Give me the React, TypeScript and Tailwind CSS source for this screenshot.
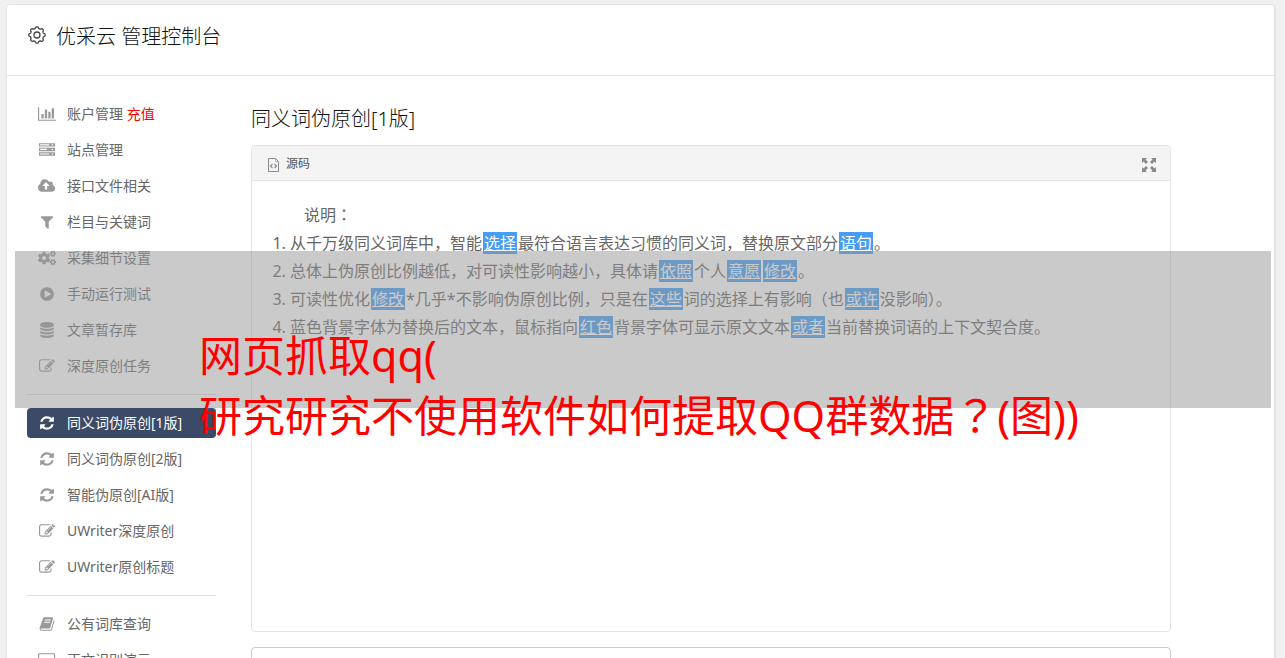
import type { ReactNode } from "react";
import { FaCogs } from "react-icons/fa";

function Glyph({ d, width = 1792 }: { d: string; width?: number }) {
  return (
    <svg viewBox={`0 0 ${width} 1792`} className="h-4 w-auto" fill="currentColor" fillRule="evenodd" aria-hidden="true">
      <path d={d} />
    </svg>
  );
}

const chart = (
  <Glyph
    width={2048}
    d="M640 896v512h-256v-512h256zm384-512v1024h-256v-1024h256zm1024 1152v128h-2048v-1536h128v1408h1920zm-640-896v768h-256v-768h256zm384-384v1152h-256v-1152h256z"
  />
);
const server = (
  <Glyph
    width={1792}
    d="M0 128h1792v384h-1792zM128 256v128h1024v-128zM1504 320m-90 0a90 90 0 1 0 180 0a90 90 0 1 0-180 0zM0 640h1792v384h-1792zM128 768v128h768v-128zM1504 832m-90 0a90 90 0 1 0 180 0a90 90 0 1 0-180 0zM0 1152h1792v384h-1792zM128 1280v128h1024v-128zM1504 1344m-90 0a90 90 0 1 0 180 0a90 90 0 1 0-180 0z"
  />
);
const cloud = (
  <Glyph
    width={1920}
    d="M1280 864q0-14-9-23l-352-352q-9-9-23-9t-23 9l-351 351q-10 12-10 24 0 14 9 23t23 9h224v352q0 13 9.5 22.5t22.5 9.5h192q13 0 22.5-9.5t9.5-22.5v-352h224q13 0 22.5-9.5t9.5-22.5zm640 288q0 159-112.5 271.5t-271.5 112.5h-1088q-185 0-316.5-131.5t-131.5-316.5q0-130 70-240t188-165q-2-30-2-43 0-212 150-362t362-150q156 0 285.5 87t188.5 231q71-62 166-62 106 0 181 75t75 181q0 76-41 138 130 31 213.5 135.5t83.5 238.5z"
  />
);
const filter = (
  <Glyph d="M1595 295q17 41-14 70l-493 493v742q0 42-39 59-13 5-25 5-27 0-45-19l-256-256q-19-19-19-45v-486l-493-493q-31-29-14-70 17-39 59-39h1280q42 0 59 39z" />
);
const cogs = <FaCogs className="size-[18px]" aria-hidden="true" />;
const play = (
  <Glyph d="M896 128q209 0 385.5 103t279.5 279.5 103 385.5-103 385.5-279.5 279.5-385.5 103-385.5-103-279.5-279.5-103-385.5 103-385.5 279.5-279.5 385.5-103zm384 823q32-18 32-55t-32-55l-544-320q-31-19-64-1-32 19-32 56v640q0 37 32 56 16 8 32 8 17 0 32-9z" />
);
const database = (
  <Glyph d="M896 768q237 0 443-43t325-127v170q0 69-103 128t-280 93.5-385 34.5-385-34.5-280-93.5-103-128v-170q119 84 325 127t443 43zm0 768q237 0 443-43t325-127v170q0 69-103 128t-280 93.5-385 34.5-385-34.5-280-93.5-103-128v-170q119 84 325 127t443 43zm0-384q237 0 443-43t325-127v170q0 69-103 128t-280 93.5-385 34.5-385-34.5-280-93.5-103-128v-170q119 84 325 127t443 43zm0-1152q208 0 385 34.5t280 93.5 103 128v128q0 69-103 128t-280 93.5-385 34.5-385-34.5-280-93.5-103-128v-128q0-69 103-128t280-93.5 385-34.5z" />
);
const edit = (
  <Glyph d="M888 1184l116-116-152-152-116 116v56h96v96h56zm440-720q-16-16-33 1l-350 350q-17 17-1 33t33-1l350-350q17-17 1-33zm80 594v190q0 119-84.5 203.5t-203.5 84.5h-832q-119 0-203.5-84.5t-84.5-203.5v-832q0-119 84.5-203.5t203.5-84.5h832q63 0 117 25 15 7 18 23 3 17-9 29l-49 49q-14 14-32 8-23-6-45-6h-832q-66 0-113 47t-47 113v832q0 66 47 113t113 47h832q66 0 113-47t47-113v-126q0-13 9-22l64-64q15-15 35-7t20 29zm-96-738l288 288-672 672h-288v-288zm444 132l-92 92-288-288 92-92q28-28 68-28t68 28l152 152q28 28 28 68t-28 68z" />
);
const refresh = (
  <Glyph d="M1639 1056q0 5-1 7-64 268-268 434.5t-478 166.5q-146 0-282.5-55t-243.5-157l-129 129q-19 19-45 19t-45-19-19-45v-448q0-26 19-45t45-19h448q26 0 45 19t19 45-19 45l-137 137q71 66 161 102t187 36q134 0 250-65t186-179q11-17 53-117 8-23 30-23h192q13 0 22.5 9.5t9.5 22.5zm25-800v448q0 26-19 45t-45 19h-448q-26 0-45-19t-19-45 19-45l138-138q-148-137-349-137-134 0-250 65t-186 179q-11 17-53 117-8 23-30 23h-199q-13 0-22.5-9.5t-9.5-22.5v-7q65-268 270-434.5t480-166.5q146 0 284 55.5t245 156.5l130-129q19-19 45-19t45 19 19 45z" />
);
const book = (
  <Glyph d="M1703 478q40 57 18 129l-275 906q-19 64-76.5 107.5t-122.5 43.5h-923q-77 0-148.5-53.5t-99.5-131.5q-24-67-2-127 0-4 3-27t4-37q1-8-3-21.5t-3-19.5q2-11 8-21t16.5-23.5 16.5-23.5q23-38 45-91.5t30-91.5q3-10 .5-30t-.5-28q3-11 17-28t17-23q21-36 42-92t25-90q1-9-2.5-32t.5-28q4-13 22-30.5t22-22.5q19-26 42.5-84.5t27.5-96.5q1-8-3-25.5t-2-26.5q2-8 9-18t18-23 17-21q8-12 16.5-30.5t15-35 16-36 19.5-32 26.5-23.5 36-11.5 47.5 5.5l-1 3q38-9 51-9h761q74 0 114 56t18 130l-274 906q-36 119-71.5 153.5t-128.5 34.5h-869q-27 0-38 15-11 16-1 43 24 70 144 70h923q29 0 56-15.5t35-41.5l300-987q7-22 5-57 38 15 59 43zm-1064 2q-4 13 2 22.5t20 9.5h608q13 0 25.5-9.5t16.5-22.5l21-64q4-13-2-22.5t-20-9.5h-608q-13 0-25.5 9.5t-16.5 22.5zm-83 256q-4 13 2 22.5t20 9.5h608q13 0 25.5-9.5t16.5-22.5l21-64q4-13-2-22.5t-20-9.5h-608q-13 0-25.5 9.5t-16.5 22.5z" />
);
const desktop = (
  <Glyph
    width={1920}
    d="M160 128h1600q160 0 160 160v1088q0 160-160 160h-544v128h-512v-128h-544q-160 0-160-160v-1088q0-160 160-160zM160 256q-32 0-32 32v832q0 32 32 32h1600q32 0 32-32v-832q0-32-32-32z"
  />
);

function GearOutline() {
  const points: string[] = [];
  const steps = 96;
  for (let i = 0; i < steps; i += 1) {
    const angle = (i / steps) * Math.PI * 2;
    const radius = 7.4 + 0.8 * Math.tanh(2 * Math.cos(angle * 8));
    points.push(`${(10 + radius * Math.cos(angle)).toFixed(2)},${(10 + radius * Math.sin(angle)).toFixed(2)}`);
  }
  return (
    <svg viewBox="0 0 20 20" className="size-5" fill="none" stroke="#444" strokeWidth="1.3" aria-hidden="true">
      <polygon points={points.join(" ")} strokeLinejoin="round" />
      <circle cx="10" cy="10" r="3" />
    </svg>
  );
}

type Item = { icon: ReactNode; label: string; extra?: string; active?: boolean };

const groups: Item[][] = [
  [
    { icon: chart, label: "账户管理", extra: "充值" },
    { icon: server, label: "站点管理" },
    { icon: cloud, label: "接口文件相关" },
    { icon: filter, label: "栏目与关键词" },
    { icon: cogs, label: "采集细节设置" },
    { icon: play, label: "手动运行测试" },
    { icon: database, label: "文章暂存库" },
    { icon: edit, label: "深度原创任务" },
  ],
  [
    { icon: refresh, label: "同义词伪原创[1版]", active: true },
    { icon: refresh, label: "同义词伪原创[2版]" },
    { icon: refresh, label: "智能伪原创[AI版]" },
    { icon: edit, label: "UWriter深度原创" },
    { icon: edit, label: "UWriter原创标题" },
  ],
  [
    { icon: book, label: "公有词库查询" },
    { icon: desktop, label: "正文识别演示" },
  ],
];

function NavItem({ icon, label, extra, active }: Item) {
  return (
    <li>
      <a
        href="#"
        className={
          active
            ? "flex h-[30px] items-center gap-2.5 rounded bg-[#3b4a66] pl-2.5 text-white"
            : "flex h-[30px] items-center gap-2.5 rounded pl-2.5 text-[#666]"
        }
      >
        <span className={active ? "flex w-5 justify-center text-white" : "flex w-5 justify-center text-[#999]"}>
          {icon}
        </span>
        <span>
          {label}
          {extra && <span className="text-[#f00]"> {extra}</span>}
        </span>
      </a>
    </li>
  );
}

function Mark({ children }: { children: ReactNode }) {
  return <span className="mx-px bg-[#459df5] px-px text-white underline">{children}</span>;
}

// Full-width punctuation that sits in the middle of its square.
function Centered({ children }: { children: ReactNode }) {
  return (
    <span lang="ja" className="font-['Noto_Sans_CJK_JP',sans-serif] leading-none">
      {children}
    </span>
  );
}

export default function App() {
  return (
    <div className="relative h-screen overflow-hidden bg-[#f0f0f0] pt-1 pr-[9px] pl-1.5 font-['Noto_Sans','Noto_Sans_CJK_SC',sans-serif] text-sm text-[#666]">
      <div className="min-h-full rounded-t border border-r-2 border-[#e4e4e4] bg-white">
        <header className="flex h-[71px] items-start gap-[9px] border-b border-[#e4e4e4] pt-4 pl-5">
          <span className="pt-1">
            <GearOutline />
          </span>
          <h1 className="text-xl leading-8 font-light text-[#111]">优采云 管理控制台</h1>
        </header>

        <div className="flex items-start">
          <nav className="ml-5 w-[189px] shrink-0 pt-[23px]">
            {groups.map((items, index) => (
              <ul
                key={index}
                className={
                  index === 0
                    ? "flex flex-col gap-1.5"
                    : "mt-[13px] flex flex-col gap-1.5 border-t border-[#ddd] pt-[13px]"
                }
              >
                {items.map((item) => (
                  <NavItem key={item.label} {...item} />
                ))}
              </ul>
            ))}
          </nav>

          <main className="mr-[103px] ml-[35px] min-w-0 flex-1 pt-[27px]">
            <h2 id="page-title" className="text-xl leading-8 font-light text-[#111]">
              同义词伪原创[1版]
            </h2>

            <section className="mt-2.5 rounded border border-[#e4e4e4]">
              <div className="flex h-[35px] items-center justify-between rounded-t border-b border-[#e4e4e4] bg-[#f4f4f4] pr-3.5 pl-4">
                <button type="button" className="flex items-center gap-[7px] pt-0.5 text-xs text-[#555]">
                  <svg viewBox="0 0 11 14" className="mt-0.5 h-3.5 w-[11px]" fill="none" stroke="#8a8a8a" aria-hidden="true">
                    <path d="M.5.5h7l3 3v10H.5z" />
                    <path d="M7.5.5v3h3" strokeWidth=".6" />
                    <path d="M4.5 6l-2 2 2 2M6.5 6l2 2-2 2" strokeWidth="1.2" />
                  </svg>
                  源码
                </button>
                <button type="button" aria-labelledby="page-title">
                  <svg viewBox="0 0 14 14" className="mt-1 size-3.5" fill="#8a8a8a" aria-hidden="true">
                    <path d="M0 0h5L3.500 1.500l2.500 2.500-2 2-2.500-2.500L0 5zM14 0v5l-1.500-1.500L10 6 8 4l2.500-2.500L9 0zM0 14V9l1.500 1.500L4 8l2 2-2.500 2.500L5 14zM14 14H9l1.500-1.500L8 10l2-2 2.500 2.500L14 9z" />
                  </svg>
                </button>
              </div>

              <div className="min-h-[450px] px-5 pt-5 text-base leading-7">
                <p className="indent-8">
                  说明<Centered>：</Centered>
                </p>
                <ol className="list-decimal pl-[18px]">
                  <li>
                    从千万级同义词库中，智能<Mark>选择</Mark>最符合语言表达习惯的同义词，替换原文部分<Mark>语句</Mark>。
                  </li>
                  <li>
                    总体上伪原创比例越低，对可读性影响越小，具体请<Mark>依照</Mark>个人<Mark>意愿</Mark>
                    <Mark>修改</Mark>。
                  </li>
                  <li>
                    可读性优化<Mark>修改</Mark>*几乎*不影响伪原创比例，只是在<Mark>这些</Mark>词的选择上有影响（也
                    <Mark>或许</Mark>没影响）。
                  </li>
                  <li>
                    蓝色背景字体为替换后的文本，鼠标指向<Mark>红色</Mark>背景字体可显示原文文本<Mark>或者</Mark>
                    当前替换词语的上下文契合度。
                  </li>
                </ol>
              </div>
            </section>

            <textarea
              aria-labelledby="page-title"
              className="mt-[15px] block h-24 w-full resize-none rounded border border-[#ccc]"
            />
          </main>
        </div>
      </div>

      <div className="absolute top-[251px] right-3.5 left-[15px] h-[157px] bg-[#969696]/50" />
      <p className="absolute top-[326px] left-[199px] text-[43px] leading-[60px] whitespace-nowrap text-[#f00]">
        网页抓取qq(
        <br />
        研究研究不使用软件如何提取QQ群数据<Centered>？</Centered>(图))
      </p>
    </div>
  );
}
